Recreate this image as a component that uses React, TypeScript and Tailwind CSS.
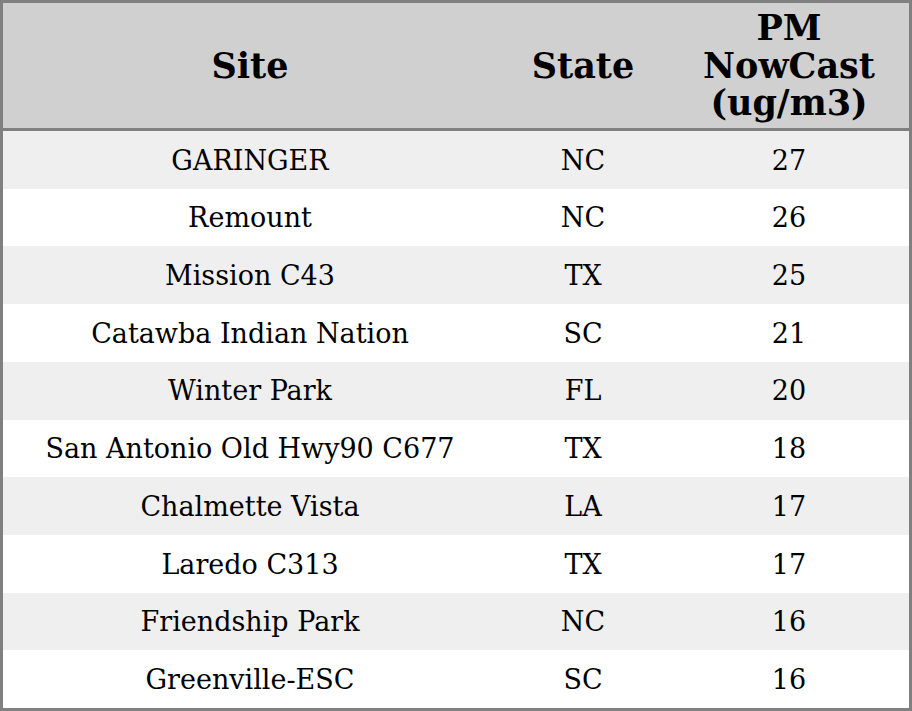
const rows = [
  { site: 'GARINGER', state: 'NC', pm: '27' },
  { site: 'Remount', state: 'NC', pm: '26' },
  { site: 'Mission C43', state: 'TX', pm: '25' },
  { site: 'Catawba Indian Nation', state: 'SC', pm: '21' },
  { site: 'Winter Park', state: 'FL', pm: '20' },
  { site: 'San Antonio Old Hwy90 C677', state: 'TX', pm: '18' },
  { site: 'Chalmette Vista', state: 'LA', pm: '17' },
  { site: 'Laredo C313', state: 'TX', pm: '17' },
  { site: 'Friendship Park', state: 'NC', pm: '16' },
  { site: 'Greenville-ESC', state: 'SC', pm: '16' },
]

export default function App() {
  return (
    <div className="w-[912px] h-[711px] bg-white border-[3px] border-[#808080] text-black font-['DejaVu_Serif',serif] flex flex-col">
      <div className="flex h-[128px] bg-[#d0d0d0] border-b-[3px] border-[#808080] font-bold text-[35px] leading-[37.5px]">
        <div className="w-[494px] flex items-center justify-center">Site</div>
        <div className="w-[172px] flex items-center justify-center">State</div>
        <div className="w-[240px] flex items-center justify-center text-center">
          PM
          <br />
          NowCast
          <br />
          (ug/m3)
        </div>
      </div>
      {rows.map((r, i) => (
        <div
          key={i}
          className={`flex flex-1 pt-[2px] text-[27px] ${i % 2 === 0 ? 'bg-[#efefef]' : 'bg-white'}`}
        >
          <div className="w-[494px] flex items-center justify-center">{r.site}</div>
          <div className="w-[172px] flex items-center justify-center">{r.state}</div>
          <div className="w-[240px] flex items-center justify-center">{r.pm}</div>
        </div>
      ))}
    </div>
  )
}
